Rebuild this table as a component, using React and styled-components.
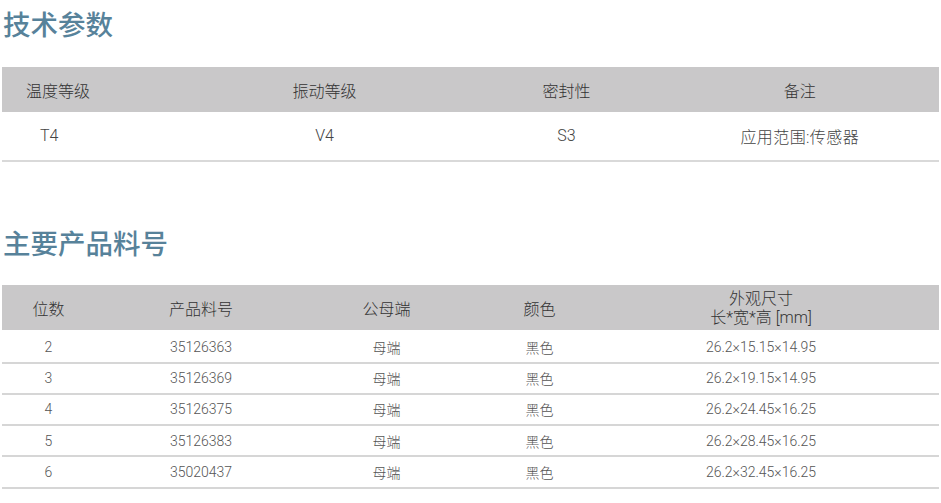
import styled, { createGlobalStyle } from "styled-components";

const GlobalStyle = createGlobalStyle`
  html, body {
    margin: 0;
    padding: 0;
    background: #fff;
  }
  body {
    font-family: Roboto, "Noto Sans CJK SC", sans-serif;
  }
`;

const specCols = "174.5px 296px 188px 1fr";
const partCols = "93px 212px 159px 147px 1fr";

const specs = [{ temp: "T4", vib: "V4", seal: "S3", note: "应用范围:传感器" }];

const parts = [
  { pos: "2", no: "35126363", size: "26.2×15.15×14.95" },
  { pos: "3", no: "35126369", size: "26.2×19.15×14.95" },
  { pos: "4", no: "35126375", size: "26.2×24.45×16.25" },
  { pos: "5", no: "35126383", size: "26.2×28.45×16.25" },
  { pos: "6", no: "35020437", size: "26.2×32.45×16.25" },
];

export default function App() {
  return (
    <>
      <GlobalStyle />
      <Page>
        <Title>技术参数</Title>
        <Table>
          <HeadRow $cols={specCols}>
            <Cell $align="left" $pad="24px">温度等级</Cell>
            <Cell>振动等级</Cell>
            <Cell>密封性</Cell>
            <Cell>备注</Cell>
          </HeadRow>
          {specs.map((s) => (
            <SpecRow key={s.temp} $cols={specCols}>
              <Cell $align="left" $pad="38px">{s.temp}</Cell>
              <Cell>{s.vib}</Cell>
              <Cell>{s.seal}</Cell>
              <Cell $spacing="0.4px">{s.note}</Cell>
            </SpecRow>
          ))}
        </Table>

        <Title $top={57}>主要产品料号</Title>
        <Table $top={19}>
          <HeadRow $cols={partCols}>
            <Cell>位数</Cell>
            <Cell>产品料号</Cell>
            <Cell>公母端</Cell>
            <Cell>颜色</Cell>
            <Cell $padRight="30px">
              <TwoLine>
                <span>外观尺寸</span>
                <span>长*宽*高 [mm]</span>
              </TwoLine>
            </Cell>
          </HeadRow>
          {parts.map((p, i) => (
            <PartRow key={p.no} $cols={partCols} $first={i === 0}>
              <Cell>{p.pos}</Cell>
              <Cell>{p.no}</Cell>
              <Cell>母端</Cell>
              <Cell>黑色</Cell>
              <Cell $padRight="30px">{p.size}</Cell>
            </PartRow>
          ))}
        </Table>
      </Page>
    </>
  );
}

const Page = styled.div`
  width: 937px;
  padding: 0 2px;
`;

const Title = styled.h2`
  margin: ${(p) => p.$top || 0}px 0 0 1px;
  height: 47px;
  line-height: 47px;
  font-family: "Noto Sans CJK SC", sans-serif;
  font-size: 27.5px;
  font-weight: 500;
  color: #57829a;
`;

const Table = styled.div`
  margin-top: ${(p) => p.$top ?? 20}px;
  display: flex;
  flex-direction: column;
`;

const HeadRow = styled.div`
  display: grid;
  grid-template-columns: ${(p) => p.$cols};
  height: 45px;
  background: #c9c8c9;
  color: #333;
  font-size: 16px;
  font-weight: 300;
`;

const SpecRow = styled.div`
  display: grid;
  grid-template-columns: ${(p) => p.$cols};
  height: 50px;
  box-sizing: border-box;
  border-bottom: 2px solid #d9d9d9;
  padding-bottom: 1px;
  color: #444;
  font-size: 16px;
  font-weight: 300;
`;

const PartRow = styled.div`
  display: grid;
  grid-template-columns: ${(p) => p.$cols};
  height: ${(p) => (p.$first ? 33.5 : 31.3)}px;
  box-sizing: border-box;
  border-bottom: 2px solid #d6d6d6;
  padding-top: ${(p) => (p.$first ? 2 : 0)}px;
  color: #555;
  font-size: 14px;
  font-weight: 300;
`;

const Cell = styled.div`
  display: flex;
  align-items: center;
  justify-content: ${(p) => (p.$align === "left" ? "flex-start" : "center")};
  padding-left: ${(p) => p.$pad || 0};
  padding-right: ${(p) => p.$padRight || 0};
  letter-spacing: ${(p) => p.$spacing || "normal"};
  white-space: nowrap;
`;

const TwoLine = styled.div`
  display: flex;
  flex-direction: column;
  align-items: center;
  line-height: 19px;
`;
